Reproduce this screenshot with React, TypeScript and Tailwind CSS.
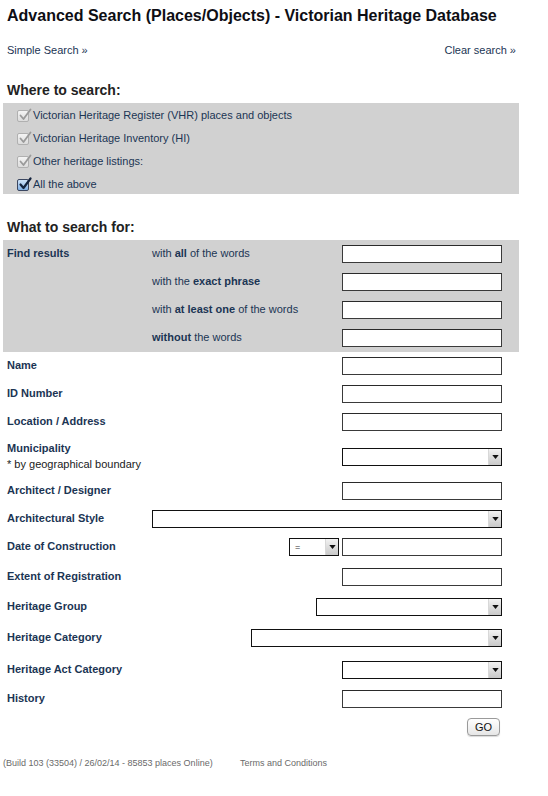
import React from "react";

const navy = "text-[#1b3554]";

function Check({ active }: { active?: boolean }) {
  return (
    <span
      className={
        "relative inline-block w-[12px] h-[12px] rounded-[2px] border mr-[4px] shrink-0 " +
        (active
          ? "border-[#3a4660] bg-gradient-to-b from-[#cfe3f8] to-[#7fb0e6]"
          : "border-[#b0b0b0] bg-gradient-to-b from-[#f4f4f4] to-[#dcdcdc]")
      }
    >
      <svg
        viewBox="0 0 14 14"
        className="absolute left-[0px] top-[-3px] w-[14px] h-[14px]"
      >
        <path
          d="M2.5 7.5 L5.5 11 L12.5 1.5"
          fill="none"
          stroke={active ? "#14233d" : "#9a9a9a"}
          strokeWidth={active ? 2.2 : 1.8}
          strokeLinecap="round"
          strokeLinejoin="round"
        />
      </svg>
    </span>
  );
}

function TextInput({ w = "w-[160px]" }: { w?: string }) {
  return (
    <div
      className={
        w +
        " h-[18px] bg-white border border-[#3a3a3a] border-t-[#2a2a2a] shrink-0"
      }
    />
  );
}

function Select({ w = "w-[160px]", value }: { w?: string; value?: string }) {
  return (
    <div
      className={
        w +
        " h-[18px] bg-white border border-[#111] flex items-stretch shrink-0"
      }
    >
      <div className="flex-1 flex items-center pl-[5px] text-[9px] leading-none text-[#333]">
        {value}
      </div>
      <div className="w-[13px] bg-gradient-to-b from-[#f2f2f2] to-[#c9c9c9] border-l border-[#d8d8d8] flex items-center justify-center">
        <svg viewBox="0 0 8 5" className="w-[7px] h-[4px]">
          <path d="M0 0 L8 0 L4 5 Z" fill="#111" />
        </svg>
      </div>
    </div>
  );
}

function Row({
  h,
  label,
  children,
}: {
  h: string;
  label: React.ReactNode;
  children: React.ReactNode;
}) {
  return (
    <div className={h + " flex items-center justify-between pl-[4px] pr-[17px]"}>
      <div className={"relative -top-px text-[11px] leading-[16px] font-bold " + navy}>{label}</div>
      <div className="flex items-center gap-[3px]">{children}</div>
    </div>
  );
}

export default function App() {
  return (
    <div
      className="w-[548px] h-[796px] bg-white text-[#111]"
      style={{ fontFamily: '"Liberation Sans", Arial, Helvetica, sans-serif' }}
    >
      <div className="pl-[7px] pt-[6px] h-[44px]">
        <h1 className="text-[16px] leading-[20px] font-bold text-[#0e0e14]">
          Advanced Search (Places/Objects) - Victorian Heritage Database
        </h1>
      </div>
      <div className={"flex justify-between pl-[7px] pr-[32px] h-[37px] text-[11px] leading-[13px] " + navy}>
        <span>Simple Search »</span>
        <span>Clear search »</span>
      </div>
      <div className="pl-[7px] h-[22px]">
        <h2 className="text-[14px] leading-[18px] font-bold text-[#222]">Where to search:</h2>
      </div>
      <div className="ml-[3px] w-[516px] h-[91px] bg-[#d1d1d1] pt-px">
        {[
          "Victorian Heritage Register (VHR) places and objects",
          "Victorian Heritage Inventory (HI)",
          "Other heritage listings:",
          "All the above",
        ].map((t, i) => (
          <div key={t} className={"h-[23px] flex items-center pl-[14px] text-[11px] " + navy}>
            <Check active={i === 3} />
            <span>{t}</span>
          </div>
        ))}
      </div>
      <div className="pl-[7px] pt-[24px] h-[46px]">
        <h2 className="text-[14px] leading-[18px] font-bold text-[#222]">What to search for:</h2>
      </div>
      <div className="ml-[3px] w-[516px] h-[112px] bg-[#d1d1d1] flex">
        <div className={"w-[149px] pl-[4px] h-[26px] flex items-center text-[11px] font-bold " + navy}>
          Find results
        </div>
        <div className="flex-1">
          {[
            <>with <b>all</b> of the words</>,
            <>with the <b>exact phrase</b></>,
            <>with <b>at least one</b> of the words</>,
            <><b>without</b> the words</>,
          ].map((t, i) => (
            <div key={i} className="h-[28px] flex items-center justify-between pr-[17px]">
              <span className={"relative -top-px text-[11px] " + navy}>{t}</span>
              <TextInput />
            </div>
          ))}
        </div>
      </div>
      <div className="ml-[3px] w-[516px]">
        <Row h="h-[28px]" label="Name"><TextInput /></Row>
        <Row h="h-[28px]" label="ID Number"><TextInput /></Row>
        <Row h="h-[28px]" label="Location / Address"><TextInput /></Row>
        <Row
          h="h-[42px]"
          label={
            <>
              <div>Municipality</div>
              <div className="font-normal text-[#1a1a22]">* by geographical boundary</div>
            </>
          }
        >
          <Select />
        </Row>
        <Row h="h-[26px]" label="Architect / Designer"><TextInput /></Row>
        <Row h="h-[29px]" label="Architectural Style"><Select w="w-[350px]" /></Row>
        <Row h="h-[28px]" label="Date of Construction">
          <Select w="w-[50px]" value="=" />
          <TextInput />
        </Row>
        <Row h="h-[32px]" label="Extent of Registration"><TextInput /></Row>
        <Row h="h-[27px]" label="Heritage Group"><Select w="w-[186px]" /></Row>
        <Row h="h-[35px]" label="Heritage Category"><Select w="w-[251px]" /></Row>
        <Row h="h-[29px]" label="Heritage Act Category"><Select /></Row>
        <Row h="h-[30px]" label="History"><TextInput /></Row>
        <div className="h-[26px] flex items-center justify-end pr-[19px]">
          <button className="w-[33px] h-[18px] rounded-[4px] border border-[#9a9a9a] bg-gradient-to-b from-white to-[#e6e6e6] text-[11px] leading-none text-[#111] shadow-[0_1px_1px_rgba(0,0,0,0.15)]">
            GO
          </button>
        </div>
      </div>
      <div className="flex pl-[3px] pt-[17px] text-[9px] leading-[12px] text-[#6a6a6a]">
        <span className="w-[237px]">(Build 103 (33504) / 26/02/14 - 85853 places Online)</span>
        <span>Terms and Conditions</span>
      </div>
    </div>
  );
}
